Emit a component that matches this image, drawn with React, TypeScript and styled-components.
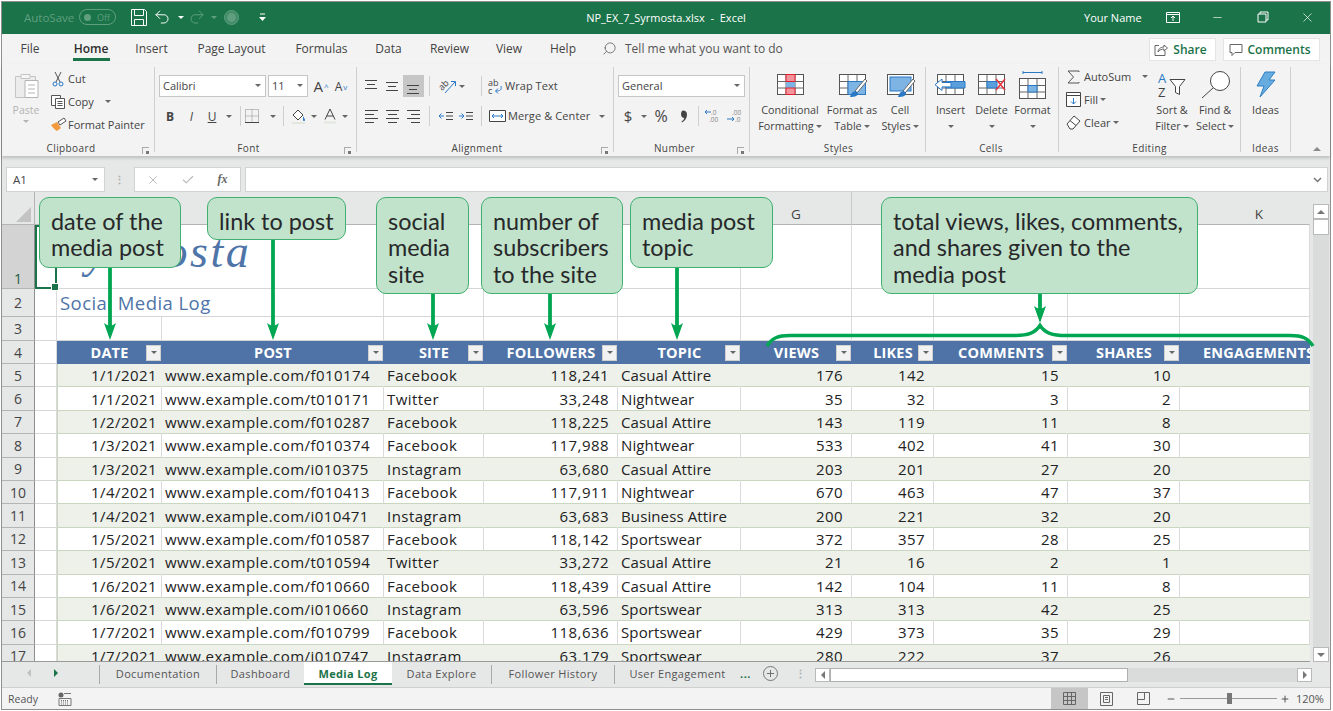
import React from 'react'
import styled, { createGlobalStyle } from 'styled-components'
import { Undo2, Redo2, X, Minus, Search, Check, Plus } from 'lucide-react'

const GREEN = '#1b7349'
const UI_FONT = '"Open Sans", "Liberation Sans", sans-serif'
const COLS = '33px 22px 105px 222px 100px 134px 123px 111px 82px 134px 112px 130px'

const GlobalStyle = createGlobalStyle`
  html, body { margin: 0; padding: 0; background: #fff; overflow: hidden; }
  * { box-sizing: border-box; }
  body { font-family: ${UI_FONT}; color: #444; }
`

const Page = styled.div`
  position: relative;
  width: 1333px;
  height: 711px;
  padding: 1px 2px 1px 1px;
  overflow: hidden;
`
const Frame = styled.div`
  height: 709px;
  border: 1px solid #8f8f8f;
  display: flex;
  flex-direction: column;
  background: #f3f3f3;
`

/* title bar */
const TitleBar = styled.div`
  height: 32px;
  flex: none;
  background: ${GREEN};
  display: grid;
  grid-template-columns: 1fr auto 1fr;
  align-items: center;
  padding-bottom: 2px;
  color: #fff;
  font-size: 11px;
`
const QuickAccess = styled.div`
  display: flex;
  align-items: center;
  padding-left: 22px;
`
const AutoSave = styled.span`
  width: 55px;
  color: #5f9f80;
  font-size: 11.5px;
`
const Toggle = styled.span`
  width: 37px;
  height: 16px;
  border: 1px solid #5f9f80;
  border-radius: 8px;
  display: flex;
  align-items: center;
  justify-content: space-between;
  padding: 0 5px 0 4px;
  color: #5f9f80;
  font-size: 9px;
  margin-right: 15px;
  &::before {
    content: '';
    width: 7px;
    height: 7px;
    border-radius: 50%;
    background: #5f9f80;
  }
`
const QuickSlot = styled.span<{ $w: number; $dim?: boolean }>`
  width: ${p => p.$w}px;
  display: flex;
  justify-content: center;
  align-items: center;
  color: ${p => (p.$dim ? '#5f9f80' : '#fff')};
`
const MiniCaret = styled.span<{ $c?: string }>`
  display: inline-block;
  flex: none;
  width: 0;
  height: 0;
  border-left: 3px solid transparent;
  border-right: 3px solid transparent;
  border-top: 3px solid ${p => p.$c || '#666'};
`
const WindowTitle = styled.div`
  font-size: 11px;
  white-space: pre;
`
const WindowControls = styled.div`
  display: flex;
  justify-content: flex-end;
  align-items: center;
`
const UserName = styled.span`
  font-size: 11px;
  width: 58px;
  margin-right: 8px;
  white-space: nowrap;
`
const WinBtn = styled.span`
  width: 45px;
  display: flex;
  justify-content: center;
`

/* tabs row */
const TabsRow = styled.div`
  height: 30px;
  flex: none;
  display: flex;
  align-items: center;
  background: #f3f3f3;
  position: relative;
`
const RibbonTab = styled.div<{ $w: number; $active?: boolean }>`
  width: ${p => p.$w}px;
  height: 30px;
  line-height: 29px;
  text-align: center;
  font-size: 12px;
  color: ${p => (p.$active ? '#2e2e2e' : '#444')};
  font-weight: ${p => (p.$active ? 600 : 400)};
  position: relative;
  ${p =>
    p.$active
      ? `&::after { content: ''; position: absolute; left: 15px; right: 14px; bottom: 3px; height: 3px; background: ${GREEN}; }`
      : ''}
`
const TellMe = styled.div`
  margin-left: 13px;
  display: flex;
  align-items: center;
  gap: 8px;
  font-size: 12px;
  color: #555;
  padding-bottom: 1px;
`
const TabActions = styled.div`
  margin-left: auto;
  margin-right: 10px;
  display: flex;
  gap: 7px;
`
const ActionBtn = styled.div<{ $w: number }>`
  width: ${p => p.$w}px;
  height: 23px;
  background: #fff;
  border: 1px solid #e4e4e4;
  display: flex;
  align-items: center;
  justify-content: center;
  gap: 5px;
  padding-right: 4px;
  color: ${GREEN};
  font-size: 12px;
  font-weight: 600;
`

/* ribbon */
const Ribbon = styled.div`
  height: 92px;
  flex: none;
  display: flex;
  padding: 3px 0 4px;
  background: #f3f3f3;
  box-shadow: 0 2px 3px rgba(0, 0, 0, 0.18);
  position: relative;
  z-index: 1;
  font-size: 11px;
`
const Group = styled.div<{ $w: number; $pad?: number }>`
  width: ${p => p.$w}px;
  flex: none;
  height: 85px;
  border-right: 1px solid #cfcfcf;
  padding-left: ${p => p.$pad ?? 4}px;
  display: flex;
  flex-direction: column;
  position: relative;
`
const GroupBody = styled.div`
  flex: 1;
  display: flex;
`
const GroupLabel = styled.div<{ $shift?: number }>`
  height: 14px;
  line-height: 14px;
  margin-bottom: -3px;
  text-align: center;
  font-size: 10px;
  letter-spacing: 0.4px;
  color: #444;
  transform: translateX(${p => p.$shift ?? 0}px);
`
const Launcher = styled.span`
  position: absolute;
  right: 5px;
  bottom: -2px;
  width: 7px;
  height: 7px;
  border-left: 1px solid #aaa;
  border-top: 1px solid #aaa;
  &::after {
    content: '';
    position: absolute;
    right: 0;
    bottom: 0;
    width: 3px;
    height: 3px;
    background: #777;
  }
`
const RowStack = styled.div`
  padding-top: 8px;
  display: flex;
  flex-direction: column;
  gap: 8px;
`
const ToolRow = styled.div`
  height: 22px;
  display: flex;
  align-items: center;
`
const Tool = styled.span<{ $w: number; $active?: boolean; $bold?: boolean; $italic?: boolean }>`
  width: ${p => p.$w}px;
  height: 22px;
  flex: none;
  display: flex;
  align-items: center;
  justify-content: center;
  gap: 3px;
  background: ${p => (p.$active ? '#c6c6c6' : 'transparent')};
  font-weight: ${p => (p.$bold ? 700 : 400)};
  font-style: ${p => (p.$italic ? 'italic' : 'normal')};
  color: #444;
`
const ToolLabel = styled.span<{ $w: number; $ls?: number }>`
  width: ${p => p.$w}px;
  flex: none;
  white-space: nowrap;
  letter-spacing: ${p => p.$ls ?? 0}px;
  color: #444;
  padding-bottom: 2px;
`
const Sep = styled.span<{ $l: number; $r: number }>`
  width: 1px;
  height: 20px;
  flex: none;
  background: #cfcfcf;
  margin: 0 ${p => p.$r}px 0 ${p => p.$l}px;
`
const Combo = styled.div<{ $w: number; $ml?: number }>`
  width: ${p => p.$w}px;
  margin-left: ${p => p.$ml ?? 0}px;
  height: 22px;
  flex: none;
  background: #fff;
  border: 1px solid #c6c6c6;
  padding: 0 4px 2px 3px;
  display: flex;
  align-items: center;
  justify-content: space-between;
  font-size: 11px;
  color: #444;
`
const PasteCol = styled.div`
  width: 40px;
  display: flex;
  flex-direction: column;
  align-items: center;
  padding-top: 4px;
  color: #b4b4b4;
  font-size: 10.5px;
  gap: 3px;
`
const SmallStack = styled.div<{ $w: number; $ml?: number; $mt?: number }>`
  width: ${p => p.$w}px;
  margin-left: ${p => p.$ml ?? 0}px;
  margin-top: ${p => p.$mt ?? 0}px;
  flex: none;
  display: flex;
  flex-direction: column;
`
const SmallItem = styled.div`
  height: 23px;
  display: flex;
  align-items: center;
  gap: 2px;
  white-space: nowrap;
  color: #444;
`
const SmallIcon = styled.span<{ $w: number }>`
  width: ${p => p.$w}px;
  flex: none;
  display: flex;
  justify-content: center;
`
const BigButton = styled.div<{ $w: number }>`
  width: ${p => p.$w}px;
  flex: none;
  display: flex;
  flex-direction: column;
  align-items: center;
  text-align: center;
  font-size: 10.8px;
  line-height: 16px;
  color: #444;
  white-space: nowrap;
`
const BigIcon = styled.div`
  height: 35px;
  display: flex;
  align-items: center;
  justify-content: center;
`
const TextLine = styled.div`
  height: 16px;
  display: flex;
  align-items: center;
  justify-content: center;
  gap: 2px;
`
const CollapseBtn = styled.div`
  flex: 1;
  display: flex;
  justify-content: flex-end;
  align-items: flex-end;
  padding: 0 9px 1px 0;
  color: #777;
`

/* formula bar */
const FormulaBar = styled.div`
  height: 36px;
  flex: none;
  background: #e6e7e7;
  display: flex;
  align-items: flex-end;
  padding-left: 4px;
  padding-right: 2px;
`
const NameBox = styled.div`
  width: 99px;
  height: 25px;
  background: #fff;
  border: 1px solid #d2d2d2;
  display: flex;
  align-items: center;
  justify-content: space-between;
  padding: 0 6px;
  font-size: 11.5px;
`
const Dots = styled.span<{ $w: number; $pl?: number; $h?: number }>`
  width: ${p => p.$w}px;
  height: ${p => p.$h ?? 25}px;
  padding-left: ${p => p.$pl ?? 0}px;
  flex: none;
  display: flex;
  align-items: center;
  justify-content: center;
  color: #aaa;
  letter-spacing: 0;
  font-size: 11px;
  font-weight: 700;
`
const FxBox = styled.div`
  width: 107px;
  height: 25px;
  background: #fff;
  border: 1px solid #d2d2d2;
  display: grid;
  grid-template-columns: 1fr 1fr 1fr;
  align-items: center;
  justify-items: center;
  color: #bbb;
`
const FxText = styled.span`
  font-family: 'Liberation Serif', serif;
  font-style: italic;
  font-weight: 700;
  font-size: 12px;
  color: #666;
`
const FormulaInput = styled.div`
  flex: 1;
  margin-left: 4px;
  height: 25px;
  background: #fff;
  border: 1px solid #d2d2d2;
  display: flex;
  align-items: center;
  justify-content: flex-end;
  padding-right: 5px;
  color: #777;
`

/* sheet */
const SheetArea = styled.div`
  height: 470px;
  flex: none;
  display: flex;
  background: #e6e7e7;
`
const Sheet = styled.div`
  width: 1308px;
  flex: none;
  overflow: hidden;
  background: #fff;
  border-bottom: 1px solid #9a9a9a;
`
const SheetRow = styled.div<{ $h: number }>`
  display: grid;
  grid-template-columns: ${COLS};
  height: ${p => p.$h}px;
  font-size: 15px;
  color: #222;
`
const ColHead = styled.div<{ $line?: boolean; $pl?: number }>`
  background: #e6e7e7;
  border-bottom: 1px solid #b4b4b4;
  border-right: 1px solid ${p => (p.$line ? '#c9c9c9' : 'transparent')};
  display: flex;
  align-items: center;
  justify-content: center;
  font-size: 13.5px;
  color: #444;
  padding: 11px 0 0 ${p => p.$pl ?? 0}px;
  position: relative;
`
const Corner = styled.div`
  background: #e6e7e7;
  border-bottom: 1px solid #b4b4b4;
  border-right: 1px solid #b4b4b4;
  position: relative;
  &::after {
    content: '';
    position: absolute;
    right: 3px;
    bottom: 2px;
    border-left: 15px solid transparent;
    border-bottom: 15px solid #c3c3c3;
  }
`
const RowNum = styled.div<{ $active?: boolean; $align?: string }>`
  background: ${p => (p.$active ? '#d3d3d3' : '#e6e7e7')};
  border-bottom: 1px solid #b4b4b4;
  border-right: 1px solid #8e8e8e;
  display: flex;
  align-items: ${p => p.$align || 'center'};
  justify-content: center;
  font-size: 14px;
  color: ${p => (p.$active ? '#1c5b3b' : '#444')};
`
const Cell = styled.div<{ $right?: boolean; $striped?: boolean; $span?: number; $pr?: number; $ls?: number }>`
  grid-column: span ${p => p.$span ?? 1};
  min-width: 0;
  background: ${p => (p.$striped ? '#edf1ea' : '#fff')};
  border-bottom: 1px solid ${p => (p.$striped ? '#c9d6c0' : '#d6d6d6')};
  border-right: 1px solid ${p => (p.$striped ? 'transparent' : '#dadada')};
  white-space: nowrap;
  overflow: visible;
  display: flex;
  align-items: center;
  justify-content: ${p => (p.$right ? 'flex-end' : 'flex-start')};
  padding: 0 ${p => p.$pr ?? 4}px 0 3px;
  letter-spacing: ${p => p.$ls ?? 0.45}px;
`
const TableCell = styled(Cell)<{ $first?: boolean }>`
  border-bottom-color: #c9d6c0;
  border-right-color: ${p => (p.$striped ? 'transparent' : '#dadada')};
  ${p => (p.$first ? 'border-left: 1px solid #c9d6c0;' : '')}
`
const ActiveA1 = styled.div`
  border: 2px solid ${GREEN};
  background: #fff;
  position: relative;
  &::after {
    content: '';
    position: absolute;
    right: -4px;
    bottom: -4px;
    width: 6px;
    height: 6px;
    background: ${GREEN};
    border: 1px solid #fff;
  }
`
const SheetTitle = styled.div`
  font-family: 'Liberation Serif', serif;
  font-style: italic;
  font-size: 46px;
  letter-spacing: 2.5px;
  color: #4f74a8;
  line-height: 50px;
  align-self: flex-end;
  margin-bottom: 11px;
`
const SheetSubtitle = styled.div`
  font-size: 18.5px;
  color: #4f74a8;
`
const HeaderCell = styled.div<{ $clip?: boolean }>`
  background: #4f73a6;
  color: #fff;
  font-weight: 700;
  font-size: 14.5px;
  letter-spacing: 0.2px;
  display: grid;
  grid-template-columns: ${p => (p.$clip ? 'auto' : '1fr auto 1fr')};
  align-items: center;
  overflow: hidden;
  white-space: nowrap;
  padding-left: ${p => (p.$clip ? 23 : 0)}px;
`
const HeaderName = styled.span`
  grid-column: 2;
`
const FilterBtn = styled.span`
  grid-column: 3;
  justify-self: end;
  width: 15px;
  height: 16px;
  margin-right: 1px;
  background: #f2f2f2;
  border: 1px solid #d0d0d0;
  display: flex;
  align-items: center;
  justify-content: center;
`
const VScroll = styled.div`
  flex: 1;
  padding: 12px 1px 0 3px;
  display: flex;
  flex-direction: column;
  background: #e6e7e7;
`
const VTrack = styled.div`
  flex: 1;
  background: #dadbdb;
  display: flex;
  flex-direction: column;
`
const ScrollBtn = styled.div<{ $h?: number; $w?: number }>`
  height: ${p => p.$h ?? 15}px;
  width: ${p => (p.$w ? `${p.$w}px` : 'auto')};
  flex: none;
  background: #fff;
  border: 1px solid #b9b9b9;
  display: flex;
  align-items: center;
  justify-content: center;
`
const Spacer = styled.div`
  flex: 1;
`
const Tri = styled.span<{ $dir: 'up' | 'down' | 'left' | 'right'; $c?: string }>`
  width: 0;
  height: 0;
  ${p => {
    const c = p.$c || '#777'
    if (p.$dir === 'up') return `border-left:4px solid transparent;border-right:4px solid transparent;border-bottom:4px solid ${c};`
    if (p.$dir === 'down') return `border-left:4px solid transparent;border-right:4px solid transparent;border-top:4px solid ${c};`
    if (p.$dir === 'left') return `border-top:4px solid transparent;border-bottom:4px solid transparent;border-right:4px solid ${c};`
    return `border-top:4px solid transparent;border-bottom:4px solid transparent;border-left:4px solid ${c};`
  }}
`

/* sheet tabs */
const TabBar = styled.div`
  height: 26px;
  flex: none;
  background: #e6e7e7;
  border-bottom: 1px solid #cfcfcf;
  display: flex;
  align-items: flex-start;
  font-size: 11px;
  color: #555;
  letter-spacing: 0.35px;
`
const TabNav = styled.div`
  width: 97px;
  height: 22px;
  flex: none;
  display: flex;
  align-items: center;
  padding-left: 25px;
  gap: 23px;
`
const TabLine = styled.span`
  width: 1px;
  height: 19px;
  margin-top: 3px;
  flex: none;
  background: #a9a9a9;
`
const SheetTab = styled.div<{ $w: number; $active?: boolean }>`
  width: ${p => p.$w}px;
  height: 23px;
  flex: none;
  text-align: center;
  line-height: 23px;
  white-space: nowrap;
  background: ${p => (p.$active ? '#fff' : 'transparent')};
  color: ${p => (p.$active ? GREEN : '#555')};
  font-weight: ${p => (p.$active ? 700 : 400)};
  border-bottom: ${p => (p.$active ? `2px solid ${GREEN}` : 'none')};
`
const More = styled.span`
  width: 18px;
  height: 22px;
  line-height: 24px;
  flex: none;
  font-weight: 700;
  color: ${GREEN};
  letter-spacing: 0.5px;
`
const AddSheet = styled.span`
  width: 15px;
  height: 15px;
  margin: 4px 0 0 5px;
  flex: none;
  border: 1px solid #777;
  border-radius: 50%;
  display: flex;
  align-items: center;
  justify-content: center;
  color: #666;
`
const HScroll = styled.div`
  width: 497px;
  height: 14px;
  margin: 6px 0 0 0;
  flex: none;
  display: flex;
  background: #dadbdb;
`
const HThumb = styled.div`
  width: 298px;
  background: #fff;
  border: 1px solid #b0b0b0;
`

/* status bar */
const StatusBar = styled.div`
  height: 21px;
  flex: none;
  background: #f3f3f3;
  display: flex;
  align-items: center;
  padding-left: 6px;
  font-size: 10.5px;
  color: #555;
`
const MacroSlot = styled.span`
  margin-left: 20px;
`
const StatusRight = styled.div`
  margin-left: auto;
  display: flex;
  align-items: center;
  height: 21px;
`
const ViewBtn = styled.span<{ $active?: boolean }>`
  width: 37px;
  height: 21px;
  display: flex;
  align-items: center;
  justify-content: center;
  background: ${p => (p.$active ? '#c6c6c6' : 'transparent')};
`
const ZoomOut = styled.span`
  margin-left: 4px;
  display: flex;
`
const Slider = styled.span`
  width: 97px;
  height: 1px;
  background: #999;
  display: flex;
  align-items: center;
  padding-left: 47px;
  margin: 0 3px 0 4px;
  &::before {
    content: '';
    width: 5px;
    height: 11px;
    background: #777;
  }
`
const Zoom = styled.span`
  width: 40px;
  padding-left: 6px;
  font-size: 11px;
`

/* callouts, these sit over the sheet */
const Overlay = styled.svg`
  position: absolute;
  left: 0;
  top: 0;
  pointer-events: none;
  z-index: 3;
`
const Callout = styled.div<{ $x: number; $w: number; $h: number }>`
  position: absolute;
  top: 197px;
  left: ${p => p.$x}px;
  width: ${p => p.$w}px;
  height: ${p => p.$h}px;
  background: #c1e2cb;
  border: 1.5px solid #3fb06f;
  border-radius: 10px;
  padding: 9.5px 0 0 11px;
  font-family: Lato, 'Open Sans', sans-serif;
  font-size: 23.4px;
  line-height: 26.5px;
  color: #27282a;
  white-space: pre;
  z-index: 4;
`

const Svg = styled.svg`
  display: block;
  flex: none;
  overflow: visible;
`

const Box = ({ w = 22, h = 22, children }: { w?: number; h?: number; children: React.ReactNode }) => (
  <Svg width={w} height={h} viewBox={`0 0 ${w} ${h}`} fill="none">
    {children}
  </Svg>
)

const Lines = ({ kind }: { kind: string }) => {
  const rows: Record<string, number[][]> = {
    top: [[2, 14, 4], [4, 12, 8], [2, 14, 12]],
    mid: [[2, 14, 6], [4, 12, 10], [2, 14, 14]],
    bot: [[2, 14, 9], [4, 12, 13], [2, 14, 17]],
    left: [[2, 15, 4], [2, 11, 8], [2, 15, 12], [2, 11, 16]],
    center: [[2, 15, 4], [4, 13, 8], [2, 15, 12], [4, 13, 16]],
    right: [[2, 15, 4], [6, 15, 8], [2, 15, 12], [6, 15, 16]],
  }
  return (
    <Box w={17} h={20}>
      {rows[kind].map(([a, b, y]) => (
        <path key={y} d={`M${a} ${y + 0.5}H${b}`} stroke="#444" />
      ))}
    </Box>
  )
}

const GridPaint = ({ children }: { children?: React.ReactNode }) => (
  <>
    <rect x="3.5" y="2.5" width="26" height="20" stroke="#555" fill="#fff" />
    <path d="M3.5 9.5H29.5M3.5 16H29.5M12 2.5V22.5M21 2.5V22.5" stroke="#666" />
    {children}
  </>
)

const PasteIcon = () => (
  <Box w={28} h={29}>
    <path d="M3.5 5.5h20v21h-20z" stroke="#c4c4c4" fill="#ececec" />
    <path d="M9 3.5h9v4H9z" stroke="#c4c4c4" fill="#f6f6f6" />
    <path d="M13 9.5h13v17H13z" stroke="#b4b4b4" fill="#fff" />
    <path d="M16 14h7M16 18h7M16 22h7" stroke="#b4b4b4" />
  </Box>
)
const CutIcon = () => (
  <Box w={12} h={16}>
    <path d="M3 1l5 10M9 1L4 11" stroke="#555" />
    <circle cx="3" cy="13" r="2" stroke="#2b78c5" />
    <circle cx="9" cy="13" r="2" stroke="#2b78c5" />
  </Box>
)
const CopyIcon = () => (
  <Box w={16} h={16}>
    <path d="M1.5 1.5h9v10h-9z" stroke="#555" fill="#fff" />
    <path d="M5.5 4.5h9v10h-9z" stroke="#555" fill="#fff" />
    <path d="M7.5 7.5h5M7.5 9.5h5M7.5 11.5h5" stroke="#555" />
  </Box>
)
const PainterIcon = () => (
  <Box w={17} h={15}>
    <path d="M1 8l6-3 4 6-4 3c-2-1-4-3-6-6z" fill="#f19a3e" />
    <path d="M8 5l6-4 2 3-6 4z" stroke="#555" fill="#fff" />
  </Box>
)
const BorderIcon = () => (
  <Box w={16} h={16}>
    <path d="M1.5 1.5h13v13h-13zM8 1.5v13M1.5 8h13" stroke="#888" strokeDasharray="1 1" />
    <path d="M1 14.5h14" stroke="#444" />
  </Box>
)
const FillIcon = () => (
  <Box w={16} h={16}>
    <path d="M2 7l5-5 5 5-5 5z" stroke="#444" fill="#fff" />
    <path d="M12 8c1 2 2 3 2 4s-1 1-1 1-1 0-1-1 0-2 0-4z" fill="#2b78c5" />
    <path d="M1 15h13" stroke="#e2e6dc" strokeWidth="2" />
  </Box>
)
const FontColorIcon = () => (
  <Box w={14} h={16}>
    <path d="M2 11.5L7 1l5 10.5M4 8h6" stroke="#444" />
    <path d="M1 14.5h12" stroke="#e2e6dc" strokeWidth="2" />
  </Box>
)
const OrientIcon = () => (
  <Box w={19} h={17}>
    <text x="1" y="10" fontSize="9" fill="#444" transform="rotate(-45 6 8)">ab</text>
    <path d="M7 15L17 4M13 3.5h4.5V8" stroke="#2b78c5" />
  </Box>
)
const IndentIcon = ({ out }: { out?: boolean }) => (
  <Box w={16} h={12}>
    <path d="M8 2.5h7M8 6h7M8 9.5h7" stroke="#444" />
    {out ? <path d="M6 6H1M3.5 3.5L1 6l2.5 2.5" stroke="#2b78c5" /> : <path d="M1 6h5M3.5 3.5L6 6 3.5 8.5" stroke="#2b78c5" />}
  </Box>
)
const WrapIcon = () => (
  <Box w={15} h={17}>
    <text x="0" y="8" fontSize="9" fill="#444">ab</text>
    <text x="0" y="16" fontSize="9" fill="#444">c</text>
    <path d="M13 8c1 4-1 5-5 5M10 10.5L7.5 13l2.5 2.5" stroke="#2b78c5" />
  </Box>
)
const MergeIcon = () => (
  <Box w={18} h={14}>
    <path d="M.5 1.5h16v11H.5z" stroke="#444" fill="#fff" />
    <path d="M3 7h11M5 5L3 7l2 2M12 5l2 2-2 2" stroke="#2b78c5" />
  </Box>
)
const CommaIcon = () => (
  <Box w={9} h={13}>
    <path d="M3 .5C5.500 .5 7 2 7 4.500 7 8 5 11 2 12.500L1.500 11.500C3 10.500 4 9.500 4.300 8 2.500 8 1 6.500 1 4.300 1 2 2 .5 3 .5z" fill="#444" />
  </Box>
)
const DecimalIcon = ({ inc }: { inc?: boolean }) => (
  <Box w={16} h={16}>
    <text x={inc ? 7 : 6} y="7" fontSize="6.5" fill="#888">{inc ? '.0' : '.00'}</text>
    <text x={inc ? 5 : 9} y="14" fontSize="6.5" fill="#888">{inc ? '.00' : '.0'}</text>
    {inc ? <path d="M7 4H1M3 2L1 4l2 2" stroke="#2b78c5" /> : <path d="M1 11h7M6 9l2 2-2 2" stroke="#2b78c5" />}
  </Box>
)
const CondIcon = () => (
  <Box w={33} h={25}>
    <GridPaint>
      <path d="M12 2.5h9v7h-9z" fill="#f2949c" />
      <path d="M12 9.5h9V16h-9z" fill="#7db4e4" />
      <path d="M12 16h9v6.5h-9z" fill="#f2949c" />
      <path d="M12 2.5h9v7h-9zM12 16h9v6.5h-9z" stroke="#e4202e" />
    </GridPaint>
  </Box>
)
const Brush = () => (
  <>
    <path d="M19 19L29 7l2 2-10 12z" fill="#fff" stroke="#666" />
    <path d="M14 25c1-4 3-6 6-6l2 2c0 3-3 4-8 4z" fill="#2b78c5" />
  </>
)
const TableIcon = () => (
  <Box w={33} h={26}>
    <GridPaint>
      <path d="M12 9.5h17.5V22.5H12z" fill="#7db4e4" stroke="#2b78c5" />
      <Brush />
    </GridPaint>
  </Box>
)
const CellStyleIcon = () => (
  <Box w={33} h={26}>
    <rect x="3.5" y="2.5" width="26" height="20" stroke="#555" fill="#fff" />
    <rect x="6" y="5" width="21" height="14" fill="#7db4e4" stroke="#2b78c5" />
    <Brush />
  </Box>
)
const InsertIcon = () => (
  <Box w={33} h={25}>
    <GridPaint>
      <path d="M12 9.5h19V16H12z" fill="#5a9fdc" stroke="#2b78c5" />
      <path d="M1 12.7L8 7v3.5h9v4.4H8V18.500z" fill="#fff" stroke="#2b78c5" />
    </GridPaint>
  </Box>
)
const DeleteIcon = () => (
  <Box w={33} h={25}>
    <GridPaint>
      <path d="M12 9.5h10V16H12z" fill="#5a9fdc" stroke="#2b78c5" />
      <path d="M21 7l9 11M30 7l-9 11" stroke="#e8313c" strokeWidth="1.5" />
    </GridPaint>
  </Box>
)
const FormatIcon = () => (
  <Box w={33} h={28}>
    <path d="M7 1.5h19M7 0v3M26 0v3" stroke="#2b78c5" />
    <g transform="translate(0 5)">
      <GridPaint>
        <path d="M12 9.5h9V16h-9z" fill="#7db4e4" stroke="#2b78c5" />
      </GridPaint>
    </g>
  </Box>
)
const SigmaIcon = () => (
  <Box w={13} h={14}>
    <path d="M12 2V1H1l5.5 6L1 13h11v-1" stroke="#555" />
  </Box>
)
const FillDownIcon = () => (
  <Box w={15} h={15}>
    <path d="M.5 .5h14v14H.5z" stroke="#444" fill="#fff" />
    <path d="M.5 3.5h14" stroke="#444" />
    <path d="M7.5 6v6M5 9.5l2.5 2.5L10 9.5" stroke="#2b78c5" />
  </Box>
)
const ClearIcon = () => (
  <Box w={15} h={15}>
    <path d="M1 9l7-8 6 5-7 8H4z" stroke="#444" fill="#fff" />
    <path d="M4 5.5l6 5" stroke="#444" />
  </Box>
)
const SortIcon = () => (
  <Box w={30} h={28}>
    <text x="1" y="12" fontSize="13" fill="#2b78c5">A</text>
    <text x="1" y="26" fontSize="13" fill="#444">Z</text>
    <path d="M13 8.5h15l-5.5 7v8l-4-2v-6z" stroke="#444" fill="#fff" />
  </Box>
)
const FindIcon = () => (
  <Box w={31} h={30}>
    <circle cx="20" cy="11" r="9.5" stroke="#444" fill="#fff" />
    <path d="M13 18L2 28" stroke="#444" />
  </Box>
)
const BoltIcon = () => (
  <Box w={22} h={27}>
    <path d="M10 1h10l-6 8h6L5 26l4-11H2z" fill="#67acdf" stroke="#2f7fc4" />
  </Box>
)
const SaveIcon = () => (
  <Box w={16} h={17}>
    <path d="M.5 .5h13l2 2v14H.5z" stroke="#fff" />
    <path d="M3.5 .5v6h9v-6M3.5 16.5v-6h9v6" stroke="#fff" />
  </Box>
)
const ShareIcon = () => (
  <Box w={14} h={13}>
    <path d="M5 2.5H1v10h10V8" stroke="#666" />
    <path d="M4 9c0-3 3-5 6-5V2l3.5 3L10 8V6C7.5 6 5.5 7 4 9z" stroke="#666" />
  </Box>
)
const CommentIcon = () => (
  <Box w={14} h={13}>
    <path d="M1 1.5h12v8H6l-3 3v-3H1z" stroke="#666" />
  </Box>
)
const RestoreIcon = () => (
  <Box w={12} h={12}>
    <path d="M3 3V1h8v8H9" stroke="#fff" />
    <path d="M1 3h8v8H1z" stroke="#fff" />
  </Box>
)
const RibbonDisplayIcon = () => (
  <Box w={14} h={11}>
    <path d="M.5 .5h13v10H.5zM.5 2.5h13" stroke="#fff" />
    <path d="M7 9V4M5 6l2-2 2 2" stroke="#fff" />
  </Box>
)
const CustomizeIcon = () => (
  <Box w={7} h={8}>
    <path d="M1 1h5" stroke="#fff" />
    <path d="M0 4h7L3.5 8z" fill="#fff" />
  </Box>
)
const MacroIcon = () => (
  <Box w={14} h={14}>
    <circle cx="3" cy="3" r="2.5" fill="#666" />
    <path d="M6 1.5h7M1 6.5h12v7H1z" stroke="#777" />
    <path d="M3 8.5h8M3 10h8M3 12h8" stroke="#777" strokeDasharray="1 1" />
  </Box>
)
const NormalViewIcon = () => (
  <Box w={13} h={13}>
    <path d="M.5 .5h12v12H.5zM.5 4.5h12M.5 8.5h12M4.5 .5v12M8.5 .5v12" stroke="#666" />
  </Box>
)
const PageViewIcon = () => (
  <Box w={13} h={14}>
    <path d="M.5 .5h12v13H.5z" stroke="#666" />
    <path d="M3.5 3.5h6v7h-6zM5 5.5h3M5 7.5h3" stroke="#666" />
  </Box>
)
const BreakViewIcon = () => (
  <Box w={13} h={13}>
    <path d="M.5 .5h12v12H.5zM.5 7.5h7V.5" stroke="#666" />
  </Box>
)

const Arrow = ({ x, from, to }: { x: number; from: number; to: number }) => (
  <>
    <path d={`M${x} ${from}V${to - 10}`} stroke="#00a651" strokeWidth="3.8" />
    <path d={`M${x} ${to}L${x - 6} ${to - 17}Q${x} ${to - 12} ${x + 6} ${to - 17}z`} fill="#00a651" />
  </>
)

const FILTER_COLS = ['DATE', 'POST', 'SITE', 'FOLLOWERS', 'TOPIC', 'VIEWS', 'LIKES', 'COMMENTS', 'SHARES']

const DATA: [string, string, string, string, string, number, number, number, number][] = [
  ['1/1/2021', 'f010174', 'Facebook', '118,241', 'Casual Attire', 176, 142, 15, 10],
  ['1/1/2021', 't010171', 'Twitter', '33,248', 'Nightwear', 35, 32, 3, 2],
  ['1/2/2021', 'f010287', 'Facebook', '118,225', 'Casual Attire', 143, 119, 11, 8],
  ['1/3/2021', 'f010374', 'Facebook', '117,988', 'Nightwear', 533, 402, 41, 30],
  ['1/3/2021', 'i010375', 'Instagram', '63,680', 'Casual Attire', 203, 201, 27, 20],
  ['1/4/2021', 'f010413', 'Facebook', '117,911', 'Nightwear', 670, 463, 47, 37],
  ['1/4/2021', 'i010471', 'Instagram', '63,683', 'Business Attire', 200, 221, 32, 20],
  ['1/5/2021', 'f010587', 'Facebook', '118,142', 'Sportswear', 372, 357, 28, 25],
  ['1/5/2021', 't010594', 'Twitter', '33,272', 'Casual Attire', 21, 16, 2, 1],
  ['1/6/2021', 'f010660', 'Facebook', '118,439', 'Casual Attire', 142, 104, 11, 8],
  ['1/6/2021', 'i010660', 'Instagram', '63,596', 'Sportswear', 313, 313, 42, 25],
  ['1/7/2021', 'f010799', 'Facebook', '118,636', 'Sportswear', 429, 373, 35, 29],
  ['1/7/2021', 'i010747', 'Instagram', '63,179', 'Sportswear', 280, 222, 37, 26],
]

const TABS: [string, number][] = [
  ['File', 56],
  ['Home', 66],
  ['Insert', 55],
  ['Page Layout', 105],
  ['Formulas', 75],
  ['Data', 59],
  ['Review', 63],
  ['View', 56],
  ['Help', 52],
]

const EmptyCols = ({ n }: { n: number }) => (
  <>
    {Array.from({ length: n }).map((_, i) => (
      <Cell key={i} />
    ))}
  </>
)

export default function App() {
  return (
    <Page>
      <GlobalStyle />
      <Frame>
        <TitleBar>
          <QuickAccess>
            <AutoSave>AutoSave</AutoSave>
            <Toggle>Off</Toggle>
            <QuickSlot $w={16}><SaveIcon /></QuickSlot>
            <QuickSlot $w={30}><Undo2 size={18} strokeWidth={1.3} /></QuickSlot>
            <QuickSlot $w={8}><MiniCaret $c="#fff" /></QuickSlot>
            <QuickSlot $w={24} $dim><Redo2 size={18} strokeWidth={1.3} /></QuickSlot>
            <QuickSlot $w={10} $dim><MiniCaret $c="#5f9f80" /></QuickSlot>
            <QuickSlot $w={24} $dim>
              <Box w={15} h={15}>
                <circle cx="7.5" cy="7.5" r="7" fill="#3f8c66" stroke="#5f9f80" />
                <circle cx="7.5" cy="7.5" r="4.5" fill="#5f9f80" />
              </Box>
            </QuickSlot>
            <QuickSlot $w={38}><CustomizeIcon /></QuickSlot>
          </QuickAccess>
          <WindowTitle>NP_EX_7_Syrmosta.xlsx  -  Excel</WindowTitle>
          <WindowControls>
            <UserName>Your Name</UserName>
            <WinBtn><RibbonDisplayIcon /></WinBtn>
            <WinBtn><Minus size={13} strokeWidth={1.2} /></WinBtn>
            <WinBtn><RestoreIcon /></WinBtn>
            <WinBtn><X size={15} strokeWidth={1.1} /></WinBtn>
          </WindowControls>
        </TitleBar>

        <TabsRow>
          {TABS.map(([name, w]) => (
            <RibbonTab key={name} $w={w} $active={name === 'Home'}>
              {name}
            </RibbonTab>
          ))}
          <TellMe>
            <Search size={15} strokeWidth={1.2} style={{ transform: 'scaleX(-1)' }} />
            Tell me what you want to do
          </TellMe>
          <TabActions>
            <ActionBtn $w={67}><ShareIcon />Share</ActionBtn>
            <ActionBtn $w={97}><CommentIcon />Comments</ActionBtn>
          </TabActions>
        </TabsRow>

        <Ribbon>
          <Group $w={153}>
            <GroupBody>
              <PasteCol>
                <PasteIcon />
                <div>Paste</div>
                <MiniCaret $c="#b4b4b4" />
              </PasteCol>
              <SmallStack $w={100} $ml={4}>
                <SmallItem><SmallIcon $w={16}><CutIcon /></SmallIcon>Cut</SmallItem>
                <SmallItem>
                  <SmallIcon $w={16}><CopyIcon /></SmallIcon>Copy
                  <MiniCaret style={{ marginLeft: 9 }} />
                </SmallItem>
                <SmallItem><SmallIcon $w={16}><PainterIcon /></SmallIcon>Format Painter</SmallItem>
              </SmallStack>
            </GroupBody>
            <GroupLabel $shift={-9}>Clipboard</GroupLabel>
            <Launcher />
          </Group>

          <Group $w={202}>
            <GroupBody>
              <RowStack>
                <ToolRow>
                  <Combo $w={107}>Calibri<MiniCaret /></Combo>
                  <Combo $w={40} $ml={2}>11<MiniCaret /></Combo>
                  <Tool $w={3} />
                  <Tool $w={20} style={{ fontSize: 15 }}>A<sup style={{ fontSize: 8, marginLeft: -2, color: '#2b78c5' }}>^</sup></Tool>
                  <Tool $w={20} style={{ fontSize: 12 }}>A<sup style={{ fontSize: 8, marginLeft: -2, color: '#2b78c5' }}>v</sup></Tool>
                </ToolRow>
                <ToolRow>
                  <Tool $w={22} $bold style={{ fontSize: 12 }}>B</Tool>
                  <Tool $w={21} $italic style={{ fontSize: 12 }}>I</Tool>
                  <Tool $w={20} style={{ fontSize: 12, textDecoration: 'underline' }}>U</Tool>
                  <Tool $w={14}><MiniCaret /></Tool>
                  <Sep $l={4} $r={0} />
                  <Tool $w={21}><BorderIcon /></Tool>
                  <Tool $w={21}><MiniCaret /></Tool>
                  <Sep $l={0} $r={4} />
                  <Tool $w={22}><FillIcon /></Tool>
                  <Tool $w={8}><MiniCaret /></Tool>
                  <Tool $w={22} style={{ marginLeft: 1 }}><FontColorIcon /></Tool>
                  <Tool $w={8}><MiniCaret /></Tool>
                </ToolRow>
              </RowStack>
            </GroupBody>
            <GroupLabel $shift={-9}>Font</GroupLabel>
            <Launcher />
          </Group>

          <Group $w={257}>
            <GroupBody>
              <RowStack>
                <ToolRow>
                  <Tool $w={21}><Lines kind="top" /></Tool>
                  <Tool $w={21}><Lines kind="mid" /></Tool>
                  <Tool $w={21} $active><Lines kind="bot" /></Tool>
                  <Sep $l={5} $r={6} />
                  <Tool $w={22}><OrientIcon /></Tool>
                  <Tool $w={8}><MiniCaret /></Tool>
                  <Sep $l={15} $r={4} />
                  <Tool $w={19}><WrapIcon /></Tool>
                  <ToolLabel $w={72} $ls={0.05}>Wrap Text</ToolLabel>
                </ToolRow>
                <ToolRow>
                  <Tool $w={21}><Lines kind="left" /></Tool>
                  <Tool $w={21}><Lines kind="center" /></Tool>
                  <Tool $w={21}><Lines kind="right" /></Tool>
                  <Sep $l={5} $r={6} />
                  <Tool $w={20}><IndentIcon out /></Tool>
                  <Tool $w={20}><IndentIcon /></Tool>
                  <Sep $l={5} $r={6} />
                  <Tool $w={20}><MergeIcon /></Tool>
                  <ToolLabel $w={87} $ls={0.1}>Merge &amp; Center</ToolLabel>
                  <Tool $w={14}><MiniCaret /></Tool>
                </ToolRow>
              </RowStack>
            </GroupBody>
            <GroupLabel $shift={-10}>Alignment</GroupLabel>
            <Launcher />
          </Group>

          <Group $w={136}>
            <GroupBody>
              <RowStack>
                <ToolRow>
                  <Combo $w={127}>General<MiniCaret /></Combo>
                </ToolRow>
                <ToolRow>
                  <Tool $w={20} style={{ fontSize: 15 }}>$</Tool>
                  <Tool $w={12}><MiniCaret /></Tool>
                  <Tool $w={1} />
                  <Tool $w={20} style={{ fontSize: 16 }}>%</Tool>
                  <Tool $w={3} />
                  <Tool $w={20}><CommaIcon /></Tool>
                  <Sep $l={4} $r={3} />
                  <Tool $w={20}><DecimalIcon inc /></Tool>
                  <Tool $w={2} />
                  <Tool $w={20}><DecimalIcon /></Tool>
                </ToolRow>
              </RowStack>
            </GroupBody>
            <GroupLabel $shift={-9}>Number</GroupLabel>
            <Launcher />
          </Group>

          <Group $w={176} $pad={8}>
            <GroupBody>
              <BigButton $w={64}>
                <BigIcon><CondIcon /></BigIcon>
                <TextLine>Conditional</TextLine>
                <TextLine>Formatting<MiniCaret /></TextLine>
              </BigButton>
              <BigButton $w={60}>
                <BigIcon><TableIcon /></BigIcon>
                <TextLine>Format as</TextLine>
                <TextLine>Table<MiniCaret /></TextLine>
              </BigButton>
              <BigButton $w={36}>
                <BigIcon><CellStyleIcon /></BigIcon>
                <TextLine>Cell</TextLine>
                <TextLine>Styles<MiniCaret /></TextLine>
              </BigButton>
            </GroupBody>
            <GroupLabel $shift={-3}>Styles</GroupLabel>
          </Group>

          <Group $w={133}>
            <GroupBody>
              <BigButton $w={41}>
                <BigIcon><InsertIcon /></BigIcon>
                <TextLine>Insert</TextLine>
                <TextLine><MiniCaret /></TextLine>
              </BigButton>
              <BigButton $w={41}>
                <BigIcon><DeleteIcon /></BigIcon>
                <TextLine>Delete</TextLine>
                <TextLine><MiniCaret /></TextLine>
              </BigButton>
              <BigButton $w={41}>
                <BigIcon><FormatIcon /></BigIcon>
                <TextLine>Format</TextLine>
                <TextLine><MiniCaret /></TextLine>
              </BigButton>
            </GroupBody>
            <GroupLabel $shift={-3}>Cells</GroupLabel>
          </Group>

          <Group $w={182} $pad={6}>
            <GroupBody>
              <SmallStack $w={86} $mt={-2}>
                <SmallItem>
                  <SmallIcon $w={17}><SigmaIcon /></SmallIcon>AutoSum
                  <MiniCaret style={{ marginLeft: 9 }} />
                </SmallItem>
                <SmallItem>
                  <SmallIcon $w={17}><FillDownIcon /></SmallIcon>Fill<MiniCaret />
                </SmallItem>
                <SmallItem>
                  <SmallIcon $w={17}><ClearIcon /></SmallIcon>Clear<MiniCaret />
                </SmallItem>
              </SmallStack>
              <BigButton $w={42}>
                <BigIcon><SortIcon /></BigIcon>
                <TextLine>Sort &amp;</TextLine>
                <TextLine>Filter<MiniCaret /></TextLine>
              </BigButton>
              <BigButton $w={44}>
                <BigIcon><FindIcon /></BigIcon>
                <TextLine>Find &amp;</TextLine>
                <TextLine>Select<MiniCaret /></TextLine>
              </BigButton>
            </GroupBody>
            <GroupLabel $shift={-3}>Editing</GroupLabel>
          </Group>

          <Group $w={50} $pad={0}>
            <GroupBody>
              <BigButton $w={49}>
                <BigIcon><BoltIcon /></BigIcon>
                <TextLine>Ideas</TextLine>
              </BigButton>
            </GroupBody>
            <GroupLabel>Ideas</GroupLabel>
          </Group>
          <CollapseBtn>
            <Tri $dir="up" $c="#8a8a8a" />
          </CollapseBtn>
        </Ribbon>

        <FormulaBar>
          <NameBox>A1<MiniCaret /></NameBox>
          <Dots $w={29}>⋮</Dots>
          <FxBox>
            <X size={14} strokeWidth={1.6} />
            <Check size={14} strokeWidth={2} />
            <FxText>fx</FxText>
          </FxBox>
          <FormulaInput>
            <Box w={9} h={6}>
              <path d="M1 1l3.5 3.5L8 1" stroke="#777" strokeWidth="1.5" />
            </Box>
          </FormulaInput>
        </FormulaBar>

        <SheetArea>
          <Sheet>
            <SheetRow $h={33}>
              <Corner />
              {['', 'B', 'C', 'D', 'E', 'F', 'G', 'H', 'I', 'J', 'K'].map((c, i) => (
                <ColHead key={i} $line={c === 'G'} $pl={c === 'K' ? 29 : 0}>
                  {c === 'G' || c === 'K' ? c : ''}
                </ColHead>
              ))}
            </SheetRow>
            <SheetRow $h={64}>
              <RowNum $active $align="flex-end">1</RowNum>
              <ActiveA1 />
              <Cell $span={2}><SheetTitle>Syrmosta</SheetTitle></Cell>
              <EmptyCols n={8} />
            </SheetRow>
            <SheetRow $h={28}>
              <RowNum>2</RowNum>
              <Cell />
              <Cell $span={2}><SheetSubtitle>Social Media Log</SheetSubtitle></Cell>
              <EmptyCols n={8} />
            </SheetRow>
            <SheetRow $h={24}>
              <RowNum>3</RowNum>
              <EmptyCols n={11} />
            </SheetRow>
            <SheetRow $h={23}>
              <RowNum>4</RowNum>
              <Cell />
              {FILTER_COLS.map(name => (
                <HeaderCell key={name}>
                  <HeaderName>{name}</HeaderName>
                  <FilterBtn><MiniCaret /></FilterBtn>
                </HeaderCell>
              ))}
              <HeaderCell $clip>ENGAGEMENTS</HeaderCell>
            </SheetRow>
            {DATA.map((d, i) => {
              const striped = i % 2 === 0
              return (
                <SheetRow key={i} $h={23.4}>
                  <RowNum>{i + 5}</RowNum>
                  <Cell />
                  <TableCell $striped={striped} $first $right>{d[0]}</TableCell>
                  <TableCell $striped={striped}>www.example.com/{d[1]}</TableCell>
                  <TableCell $striped={striped}>{d[2]}</TableCell>
                  <TableCell $striped={striped} $right $pr={8}>{d[3]}</TableCell>
                  <TableCell $striped={striped} $ls={0.12}>{d[4]}</TableCell>
                  <TableCell $striped={striped} $right $pr={8}>{d[5]}</TableCell>
                  <TableCell $striped={striped} $right $pr={8}>{d[6]}</TableCell>
                  <TableCell $striped={striped} $right $pr={8}>{d[7]}</TableCell>
                  <TableCell $striped={striped} $right $pr={8}>{d[8]}</TableCell>
                  <TableCell $striped={striped} />
                </SheetRow>
              )
            })}
          </Sheet>
          <VScroll>
            <VTrack>
              <ScrollBtn><Tri $dir="up" /></ScrollBtn>
              <ScrollBtn $h={16} />
              <Spacer />
              <ScrollBtn><Tri $dir="down" /></ScrollBtn>
            </VTrack>
          </VScroll>
        </SheetArea>

        <TabBar>
          <TabNav>
            <Tri $dir="left" $c="#c0c0c0" />
            <Tri $dir="right" $c={GREEN} />
          </TabNav>
          <TabLine />
          <SheetTab $w={116}>Documentation</SheetTab>
          <TabLine />
          <SheetTab $w={87}>Dashboard</SheetTab>
          <SheetTab $w={88} $active>Media Log</SheetTab>
          <SheetTab $w={99}>Data Explore</SheetTab>
          <TabLine />
          <SheetTab $w={122}>Follower History</SheetTab>
          <TabLine />
          <SheetTab $w={125}>User Engagement</SheetTab>
          <More>...</More>
          <AddSheet><Plus size={11} strokeWidth={2} /></AddSheet>
          <Dots $w={37} $pl={7} $h={22}>⋮</Dots>
          <HScroll>
            <ScrollBtn $w={15} $h={14}><Tri $dir="left" /></ScrollBtn>
            <HThumb />
            <Spacer />
            <ScrollBtn $w={15} $h={14}><Tri $dir="right" /></ScrollBtn>
          </HScroll>
        </TabBar>

        <StatusBar>
          Ready
          <MacroSlot><MacroIcon /></MacroSlot>
          <StatusRight>
            <ViewBtn $active><NormalViewIcon /></ViewBtn>
            <ViewBtn><PageViewIcon /></ViewBtn>
            <ViewBtn><BreakViewIcon /></ViewBtn>
            <ZoomOut><Minus size={10} strokeWidth={2.5} /></ZoomOut>
            <Slider />
            <Plus size={10} strokeWidth={2.5} />
            <Zoom>120%</Zoom>
          </StatusRight>
        </StatusBar>
      </Frame>

      <Overlay width={1333} height={711} viewBox="0 0 1333 711" fill="none">
        <Arrow x={110} from={268} to={340} />
        <Arrow x={273} from={240} to={340} />
        <Arrow x={433} from={294} to={340} />
        <Arrow x={550} from={294} to={340} />
        <Arrow x={677} from={268} to={340} />
        <Arrow x={1040} from={294} to={323} />
        <path
          d="M767 346C772 338 778 335.5 790 335.5H1014C1028 335.5 1035 333 1040 325.5C1045 333 1052 335.5 1066 335.5H1290C1302 335.5 1308 338 1313 346"
          stroke="#00a651"
          strokeWidth="3.5"
        />
      </Overlay>
      <Callout $x={39} $w={142} $h={71}>{'date of the\nmedia post'}</Callout>
      <Callout $x={207} $w={139} $h={43}>link to post</Callout>
      <Callout $x={376} $w={93} $h={97}>{'social\nmedia\nsite'}</Callout>
      <Callout $x={481} $w={142} $h={97}>{'number of\nsubscribers\nto the site'}</Callout>
      <Callout $x={630} $w={143} $h={71}>{'media post\ntopic'}</Callout>
      <Callout $x={881} $w={317} $h={97}>{'total views, likes, comments,\nand shares given to the\nmedia post'}</Callout>
    </Page>
  )
}
